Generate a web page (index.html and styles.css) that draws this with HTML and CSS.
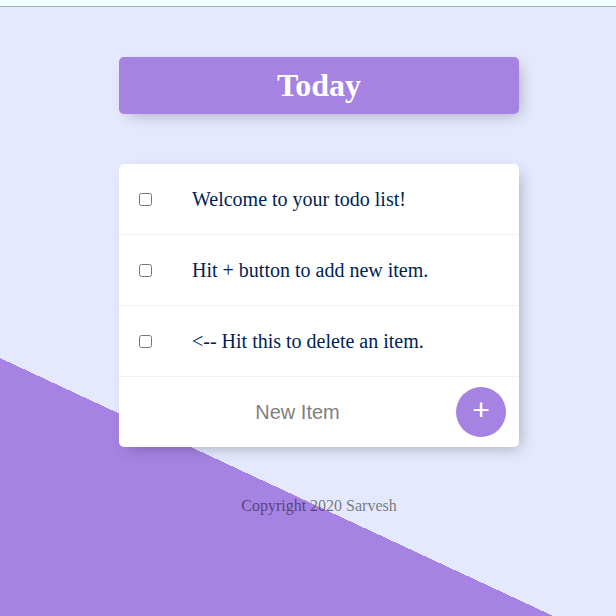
FILE: index.html
```html
<!DOCTYPE html>
<html lang="en">
<head>
<meta charset="utf-8">
<title>To Do List</title>
<link rel="stylesheet" href="styles.css">
</head>
<body>
<div class="top-strip"></div>
<main>
<div class="box heading"><h1>Today</h1></div>
<div class="box">
<div class="item"><input type="checkbox"><p>Welcome to your todo list!</p></div>
<div class="item"><input type="checkbox"><p>Hit + button to add new item.</p></div>
<div class="item"><input type="checkbox"><p>&lt;-- Hit this to delete an item.</p></div>
<form class="item">
<input class="new-item" type="text" placeholder="New Item" autocomplete="off">
<button class="add" type="button">+</button>
</form>
</div>
<footer>Copyright 2020 Sarvesh</footer>
</main>
</body>
</html>
```
FILE: styles.css
```css
html {
  height: 100%;
  background: linear-gradient(25deg, #A683E3 233.8px, #E4E9FD 233.8px);
  font-family: "Liberation Serif", serif;
}

body {
  margin: 0;
}

.top-strip {
  height: 6px;
  background: azure;
  border-bottom: 1px solid #A3B1AE;
}

main {
  padding: 50px 0 0 22px;
}

h1 {
  color: #fff;
  padding: 10px;
  margin: 0;
}

.box {
  width: 400px;
  margin: 0 auto 50px;
  background: white;
  border-radius: 5px;
  box-shadow: 5px 5px 15px -5px rgba(0, 0, 0, 0.3);
}

.heading {
  background-color: #A683E3;
  text-align: center;
}

.item {
  min-height: 70px;
  display: flex;
  align-items: center;
  border-bottom: 1px solid #F1F1F1;
}

.item:last-child {
  border-bottom: 0;
}

input[type="checkbox"] {
  margin: 20px;
}

p {
  margin: 0;
  padding: 20px;
  font-size: 20px;
  color: #001F55;
}

.add {
  height: 50px;
  width: 50px;
  border-radius: 50%;
  border: 0;
  padding: 0 0 5px;
  background: #A683E3;
  color: #fff;
  font: 30px "Liberation Sans", sans-serif;
}

.new-item {
  box-sizing: border-box;
  text-align: center;
  height: 60px;
  margin: 0 0 0 20px;
  padding: 0;
  border: 0;
  background: transparent;
  font: 20px "Liberation Sans", sans-serif;
  width: 317px;
}

.new-item::placeholder {
  color: #808080;
}

footer {
  color: rgba(0, 0, 0, 0.5);
  text-align: center;
}
```
